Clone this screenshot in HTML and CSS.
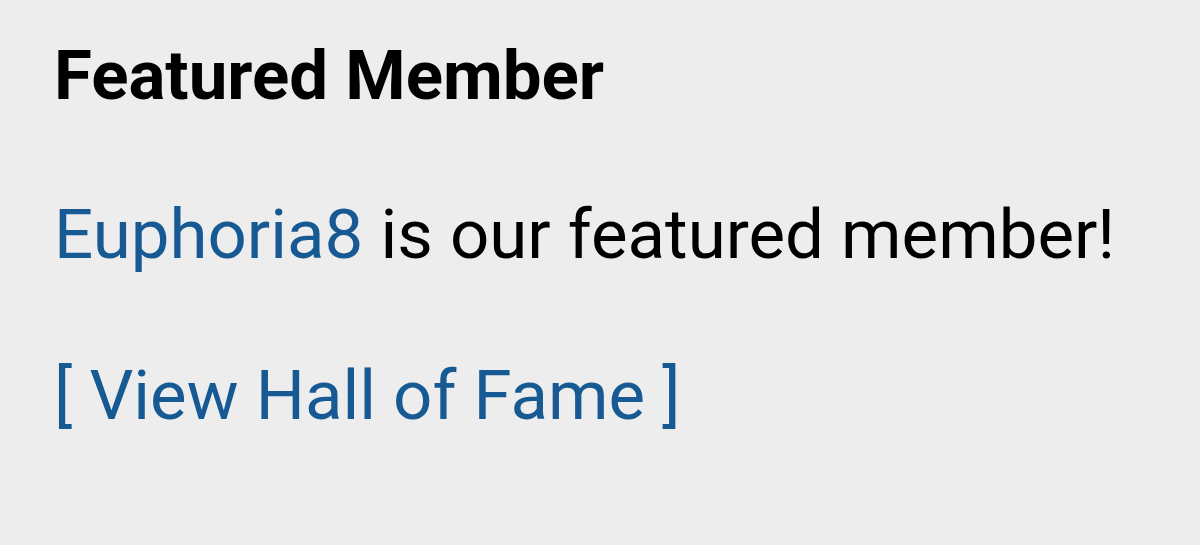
FILE: index.html
```html
<!DOCTYPE html>
<html lang="en">
<head>
    <meta charset="UTF-8">
    <meta name="viewport" content="width=device-width, initial-scale=1.0">
    <title>Featured Member</title>
    <link rel="stylesheet" href="styles.css">
</head>
<body>
    <div class="featured">
        <h2 class="featured-title">Featured Member</h2>
        <p class="featured-text"><a href="#" class="member-link">Euphoria8</a> is our featured member!</p>
        <p class="featured-text"><a href="#" class="hof-link">[ View Hall of Fame ]</a></p>
    </div>
</body>
</html>
```

FILE: styles.css
```css
body {
    margin: 0;
    background-color: #ededed;
    font-family: Roboto, "Liberation Sans", sans-serif;
    color: #000;
}
.featured {
    padding: 31px 54px;
}
.featured-title {
    margin: 0;
    font-size: 69px;
    font-weight: bold;
    line-height: 90px;
}
.featured-text {
    margin: 67px 0 0 0;
    font-size: 69px;
    line-height: 94px;
}
.member-link,
.hof-link {
    color: #175a93;
    text-decoration: none;
}
```
